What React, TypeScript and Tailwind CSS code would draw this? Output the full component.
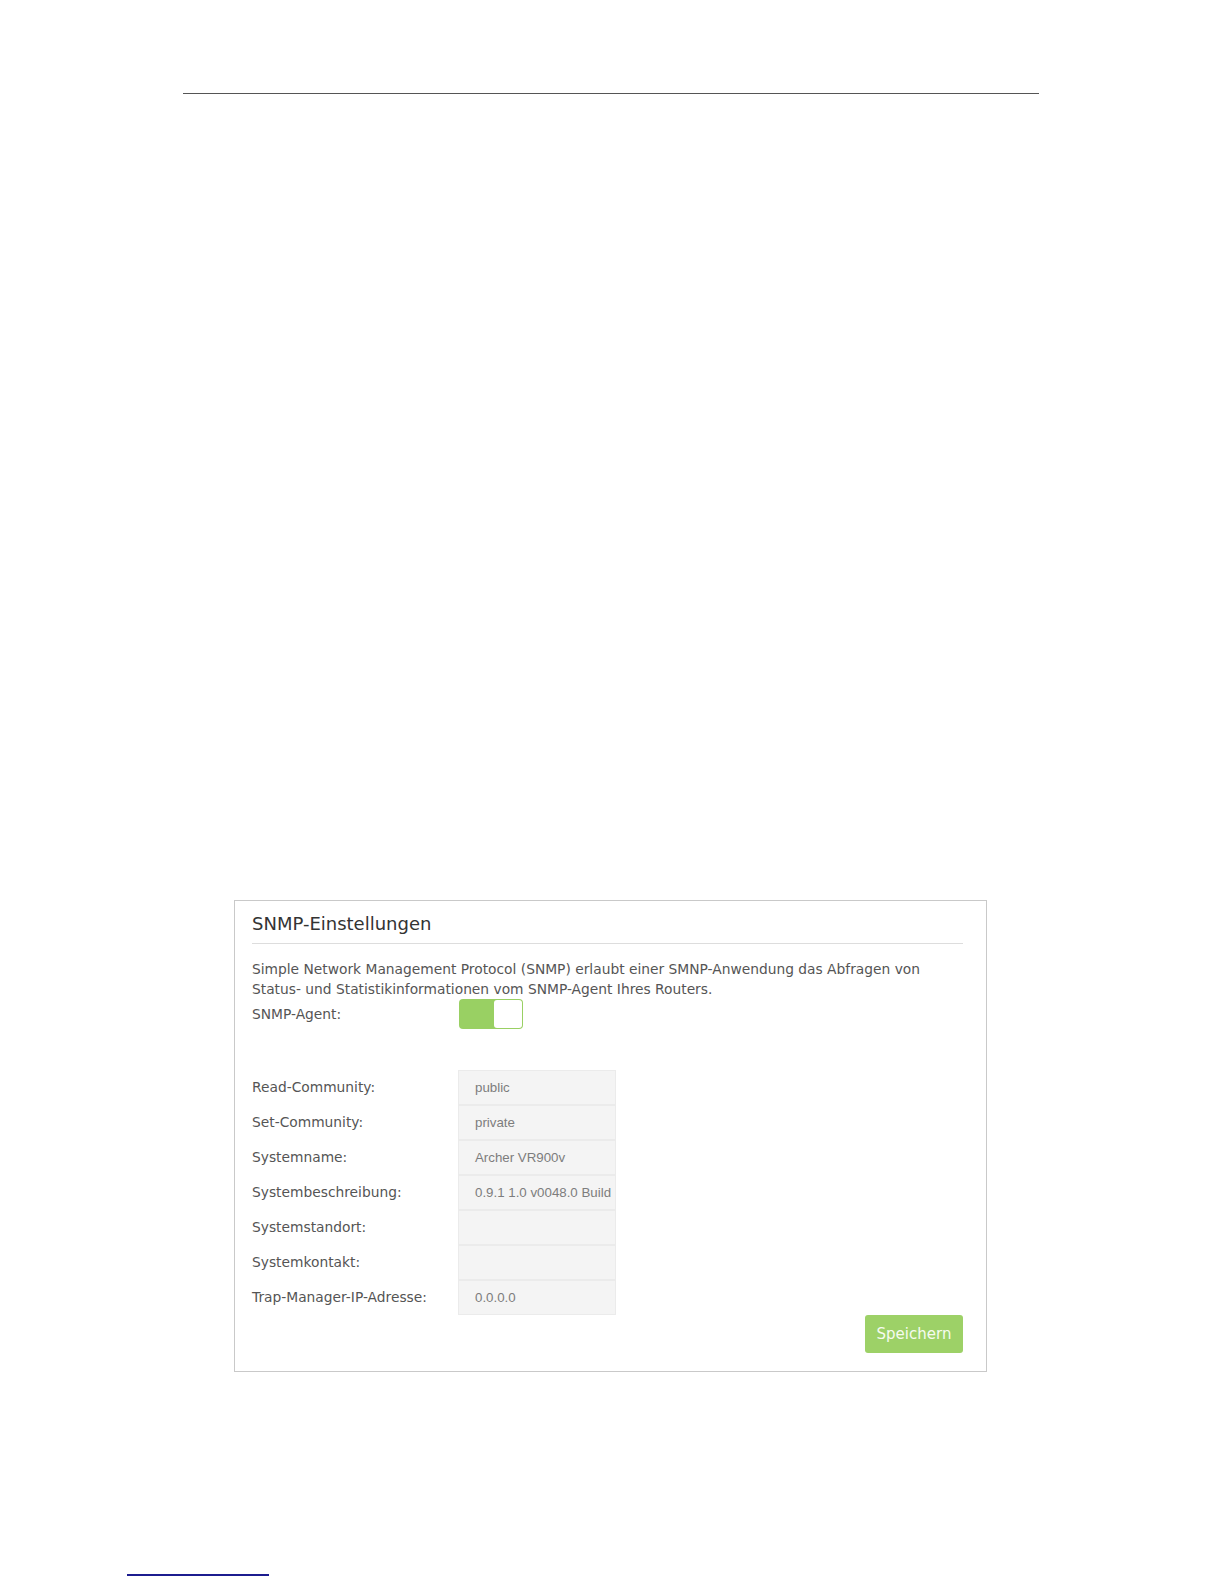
import React from 'react';

const fields = [
  { label: 'Read-Community:', value: 'public' },
  { label: 'Set-Community:', value: 'private' },
  { label: 'Systemname:', value: 'Archer VR900v' },
  { label: 'Systembeschreibung:', value: '0.9.1 1.0 v0048.0 Build' },
  { label: 'Systemstandort:', value: '' },
  { label: 'Systemkontakt:', value: '' },
  { label: 'Trap-Manager-IP-Adresse:', value: '0.0.0.0' },
];

export default function App() {
  return (
    <div className="w-[1224px] h-[1584px] bg-white flex flex-col font-['DejaVu_Sans',sans-serif]">
      {/* page header rule */}
      <div className="mt-[93px] ml-[183px] w-[856px] h-px bg-[#555555]" />

      {/* settings panel */}
      <div className="mt-[806px] ml-[234px] w-[753px] h-[472px] border border-[#c9c9c9] pl-[17px] pr-[23px] pt-[11px] flex flex-col">
        <h2 className="text-[18px] leading-[24px] text-[#333333]">SNMP-Einstellungen</h2>
        <div className="mt-[7px] h-px bg-[#dddddd]" />

        <p className="mt-[15px] text-[13.8px] leading-[20px] text-[#555555] whitespace-nowrap">
          Simple Network Management Protocol (SNMP) erlaubt einer SMNP-Anwendung das Abfragen von
          <br />
          Status- und Statistikinformationen vom SNMP-Agent Ihres Routers.
        </p>

        <div className="flex items-center h-[30px]">
          <span className="w-[207px] text-[13.8px] text-[#555555]">SNMP-Agent:</span>
          <div className="w-[64px] h-[30px] rounded-[4px] bg-[#99d063] p-px flex justify-end">
            <div className="w-[28px] h-full rounded-[3px] bg-white" />
          </div>
        </div>

        <div className="mt-[41px] flex flex-col">
          {fields.map((f) => (
            <div key={f.label} className="flex items-center h-[35px]">
              <span className="w-[206px] text-[13.8px] text-[#555555] whitespace-nowrap">{f.label}</span>
              <div className="w-[158px] h-[35px] border border-[#ebebeb] bg-[#f4f4f4] pl-[16px] flex items-center overflow-hidden">
                <span className="font-['Liberation_Sans',sans-serif] text-[13.3px] text-[#7d7d7d] whitespace-nowrap">
                  {f.value}
                </span>
              </div>
            </div>
          ))}
        </div>

        <div className="flex justify-end">
          <button className="w-[98px] h-[38px] rounded-[3px] bg-[#9dd167] text-[15px] text-[#f6fbef]">
            Speichern
          </button>
        </div>
      </div>

      {/* footer link rule */}
      <div className="mt-auto mb-[8px] ml-[127px] w-[142px] h-[2px] bg-[#1c1c8f]" />
    </div>
  );
}
